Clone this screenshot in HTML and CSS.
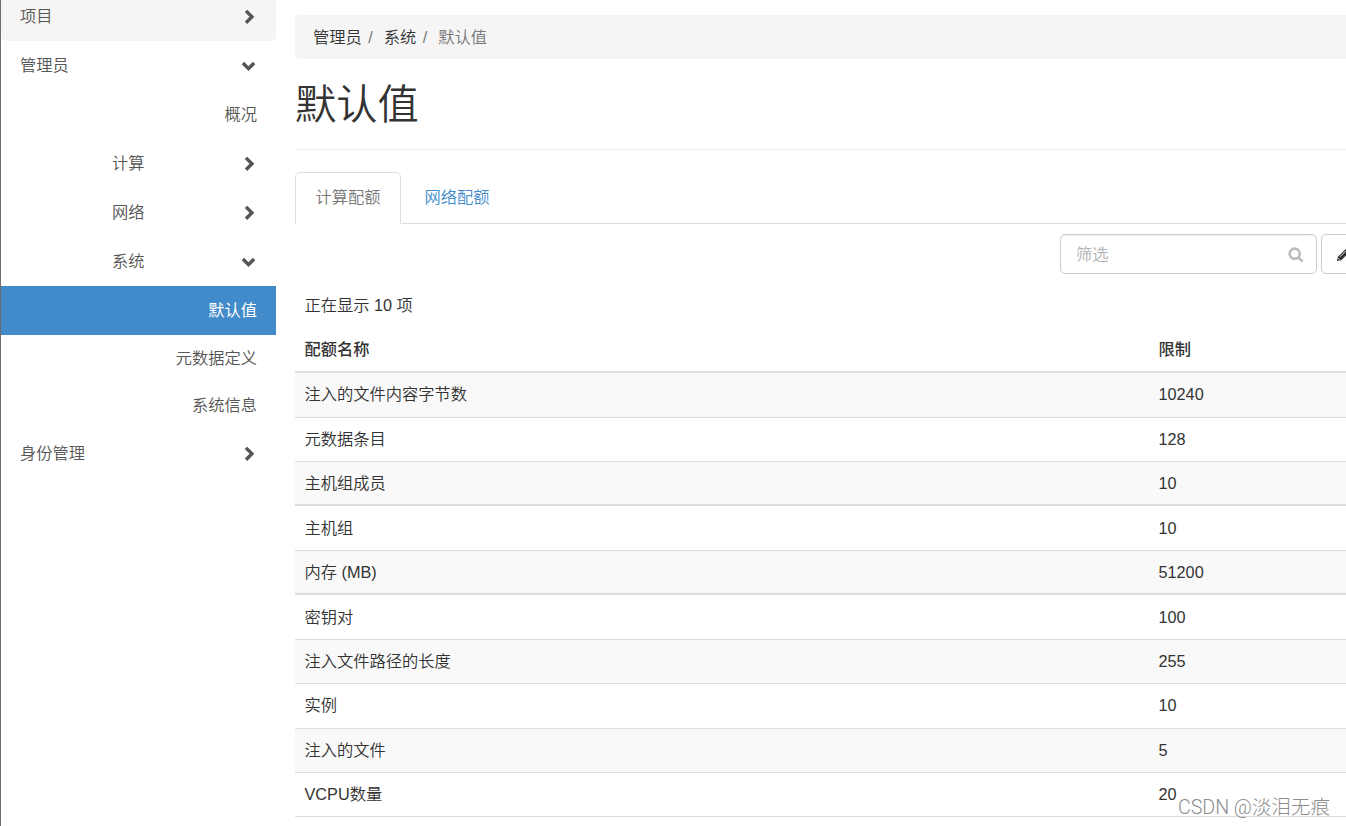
FILE: index.html
```html
<!DOCTYPE html>
<html lang="zh-CN">

<head>
    <meta charset="UTF-8">
    <meta name="viewport" content="width=device-width, initial-scale=1.0">
    <title>默认值</title>
    <link rel="stylesheet" href="styles.css">
</head>

<body>
    <!-- 图标 -->
    <svg class="sprite" aria-hidden="true">
        <symbol id="right" viewBox="0 0 16 16"><path d="M4 1.9 9.9 7.8 4 13.7" /></symbol>
        <symbol id="down" viewBox="0 0 16 16"><path d="M.9 5 6.5 10.6 12.1 5" /></symbol>
        <symbol id="search" viewBox="0 0 16 16"><circle cx="6.7" cy="6.7" r="5.1" /><path d="m10.6 10.6 4 4" /></symbol>
    </svg>

    <!-- 侧边栏 -->
    <nav class="sidebar">
        <a class="item open-bg" href="#">项目<svg class="chevron"><use href="#right" /></svg></a>
        <a class="item" href="#">管理员<svg class="chevron"><use href="#down" /></svg></a>
        <a class="item leaf" href="#">概况</a>
        <a class="item sub" href="#">计算<svg class="chevron"><use href="#right" /></svg></a>
        <a class="item sub" href="#">网络<svg class="chevron"><use href="#right" /></svg></a>
        <a class="item sub" href="#">系统<svg class="chevron"><use href="#down" /></svg></a>
        <a class="item leaf active" href="#">默认值</a>
        <a class="item leaf small" href="#">元数据定义</a>
        <a class="item leaf small" href="#">系统信息</a>
        <a class="item" href="#">身份管理<svg class="chevron"><use href="#right" /></svg></a>
    </nav>

    <!-- 主内容 -->
    <main class="content">
        <ol class="breadcrumb">
            <li><a href="#">管理员</a></li>
            <li><a href="#">系统</a></li>
            <li class="current">默认值</li>
        </ol>

        <h1>默认值</h1>

        <div class="tabs">
            <a class="tab selected" href="#">计算配额</a>
            <a class="tab" href="#">网络配额</a>
        </div>

        <div class="actions">
            <div class="filter">
                <input type="text" placeholder="筛选">
                <svg class="search-icon"><use href="#search" /></svg>
            </div>
            <button class="btn" type="button">
                <svg class="pencil" viewBox="0 0 16 16"><path d="M1 15l1-4.6L10.4 2l3.6 3.6L5.6 14zM11.3 1.1l1-.8q.6-.4 1.2.1l2.1 2.1q.5.6 0 1.2l-.8.9z" /><path class="shine" d="m4.2 10.4 6-6M2.4 12l1.6 1.6" /></svg>
            </button>
        </div>

        <p class="count">正在显示 10 项</p>
        <table>
            <thead>
                <tr><th class="name">配额名称</th><th>限制</th></tr>
            </thead>
            <tbody>
                <tr><td>注入的文件内容字节数</td><td>10240</td></tr>
                <tr><td>元数据条目</td><td>128</td></tr>
                <tr class="thick"><td>主机组成员</td><td>10</td></tr>
                <tr><td>主机组</td><td>10</td></tr>
                <tr class="thick"><td>内存 (MB)</td><td>51200</td></tr>
                <tr><td>密钥对</td><td>100</td></tr>
                <tr><td>注入文件路径的长度</td><td>255</td></tr>
                <tr><td>实例</td><td>10</td></tr>
                <tr><td>注入的文件</td><td>5</td></tr>
                <tr><td>VCPU数量</td><td>20</td></tr>
            </tbody>
        </table>
    </main>

    <div class="watermark">CSDN @淡泪无痕</div>
</body>

</html>
```
FILE: styles.css
```css
* {
    box-sizing: border-box;
}

body {
    display: flex;
    height: 826px;
    margin: 0;
    overflow: hidden;
    background-color: #fff;
    color: #333;
    font-family: "Liberation Sans", "Noto Sans CJK SC", sans-serif;
    font-size: 16.25px;
    font-weight: 350;
    line-height: 24px;
}

a {
    color: inherit;
    text-decoration: none;
}

.sprite {
    position: absolute;
    width: 0;
    height: 0;
}

.sidebar {
    flex: none;
    width: 276px;
    border-left: 1px solid #6e6e6e;
    color: #555;
}

.item {
    display: flex;
    align-items: center;
    justify-content: space-between;
    height: 49px;
    padding: 0 19px 2px;
}

.open-bg {
    height: 41px;
    padding-bottom: 9px;
    background-color: #f5f5f5;
    border-radius: 0 0 5px 5px;
}

.sub {
    padding-left: 111px;
}

.leaf {
    justify-content: flex-end;
}

.small {
    height: 47px;
}

.active {
    background-color: #428bca;
    color: #fff;
    font-weight: 400;
}

.chevron {
    width: 16px;
    height: 16px;
    margin: 2px -1px 0 0;
    fill: none;
    stroke: #555;
    stroke-width: 3.4;
}

.content {
    flex: 1;
    min-width: 0;
    padding-left: 19px;
    overflow: hidden;
}

.breadcrumb {
    display: flex;
    align-items: center;
    height: 44px;
    margin: 15px 0 0;
    padding: 0 18px;
    background-color: #f5f5f5;
    border-radius: 5px 0 0 5px;
    list-style: none;
}

.breadcrumb li + li::before {
    content: "/";
    padding: 0 11px 0 6.5px;
    color: #777;
}

.breadcrumb .current {
    color: #777;
}

h1 {
    height: 91px;
    margin: 0 0 22px;
    padding-top: 23px;
    border-bottom: 1px solid #eee;
    font-size: 41.25px;
    font-weight: 350;
    line-height: 46px;
}

.tabs {
    display: flex;
    height: 52px;
    border-bottom: 1px solid #ddd;
}

.tab {
    height: 52px;
    padding: 12px 19.5px;
    border: 1px solid transparent;
    color: #428bca;
}

.tab + .tab {
    margin-left: 3px;
}

.tab.selected {
    background-color: #fff;
    border-color: #ddd;
    border-bottom-color: #fff;
    border-radius: 5px 5px 0 0;
    color: #777;
}

.actions {
    display: flex;
    gap: 4px;
    margin: 10px 0 0 765px;
}

.filter {
    position: relative;
    flex: none;
}

.filter input {
    display: block;
    width: 257px;
    height: 40px;
    padding: 0 15px;
    border: 1px solid #ccc;
    border-radius: 5px;
    box-shadow: inset 0 1px 1px rgba(0, 0, 0, 0.075);
    font: inherit;
}

.filter input::placeholder {
    color: #b0b0b0;
    opacity: 1;
}

.search-icon {
    position: absolute;
    top: 13px;
    right: 13px;
    width: 16px;
    height: 16px;
    fill: none;
    stroke: #bbb;
    stroke-width: 2.6;
}

.btn {
    display: flex;
    flex: none;
    align-items: center;
    height: 40px;
    padding: 0 14px;
    background-color: #fff;
    border: 1px solid #ccc;
    border-radius: 5px;
}

.pencil {
    width: 15px;
    height: 15px;
    fill: #333;
}

.shine {
    fill: none;
    stroke: #fff;
    stroke-width: 0.9;
}

.count {
    margin: 19px 0 1px;
    padding: 0 9.5px;
}

table {
    width: 100%;
    border-spacing: 0;
    table-layout: fixed;
}

th,
td {
    height: 44.43px;
    padding: 0 9.5px 1px;
    border-bottom: 1px solid #ddd;
    text-align: left;
}

th {
    height: 55.2px;
    padding-top: 9px;
    border-bottom-width: 2px;
    font-weight: 500;
}

.thick td {
    padding-bottom: 0;
    border-bottom-width: 2px;
}

.name {
    width: 854px;
}

tbody tr:nth-child(odd) {
    background-color: #f9f9f9;
}

.watermark {
    position: absolute;
    right: 16px;
    bottom: 5px;
    color: #8c8c8c;
    font-family: Roboto, "Noto Sans CJK SC", sans-serif;
    font-size: 19.7px;
    font-weight: 300;
    letter-spacing: -0.1px;
    line-height: 26px;
}
```
